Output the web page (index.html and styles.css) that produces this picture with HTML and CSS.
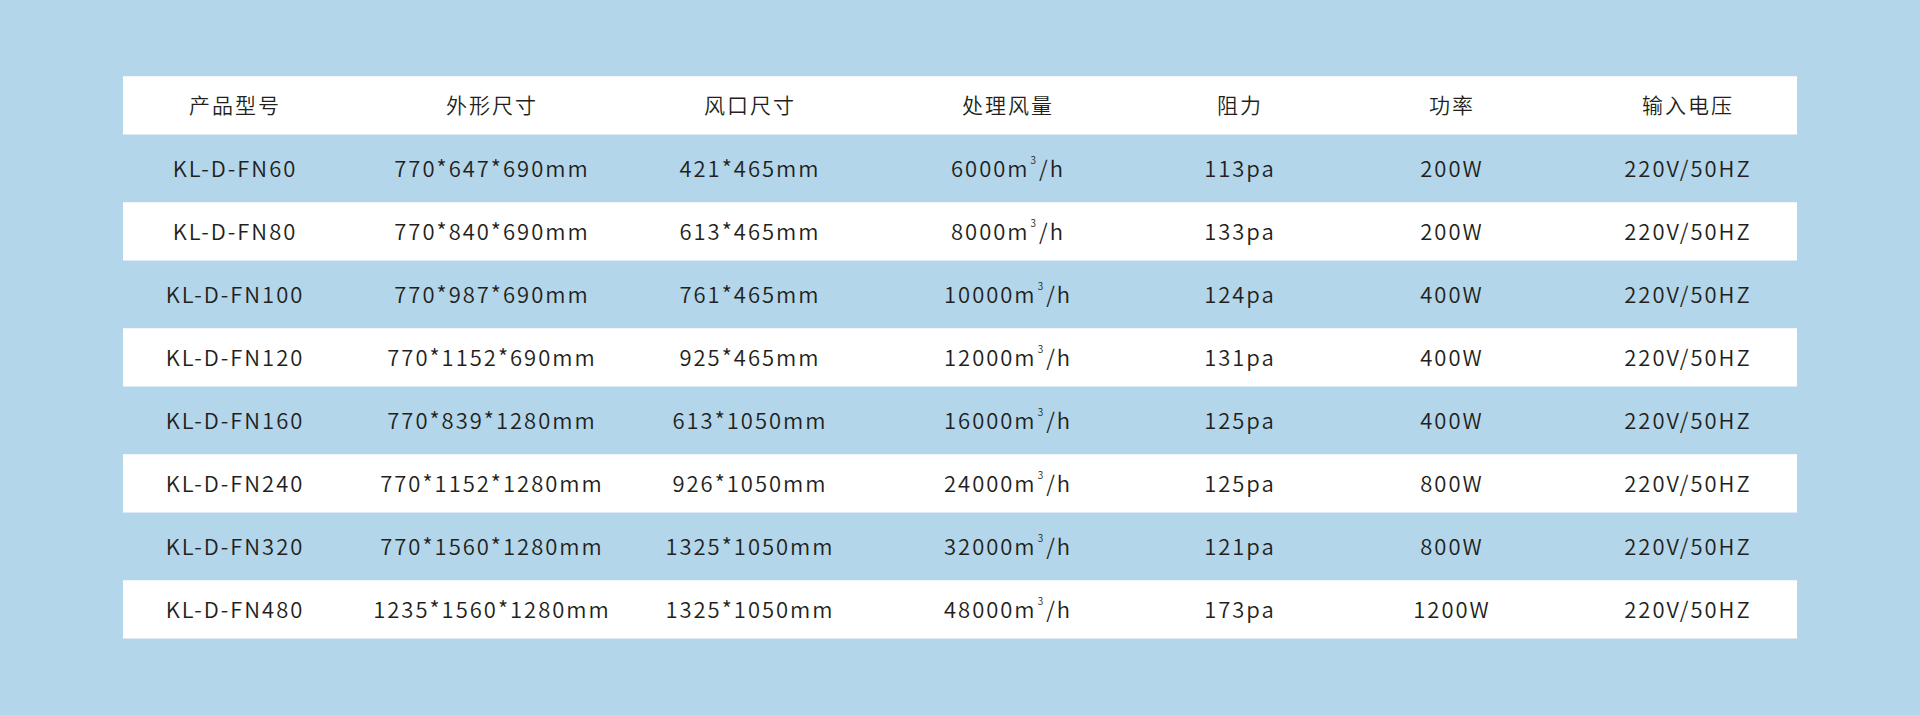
FILE: index.html
```html
<!DOCTYPE html>
<html lang="zh-CN">
<head>
<meta charset="utf-8">
<title>产品参数</title>
<link rel="stylesheet" href="styles.css">
</head>
<body>
<div class="page">
  <div class="spec-table">
    <div class="row head">
      <div class="cell">产品型号</div><div class="cell">外形尺寸</div><div class="cell">风口尺寸</div><div class="cell">处理风量</div><div class="cell">阻力</div><div class="cell">功率</div><div class="cell">输入电压</div>
    </div>
    <div class="row tall">
      <div class="cell">KL-D-FN60</div><div class="cell">770*647*690mm</div><div class="cell">421*465mm</div><div class="cell">6000m<span class="sup">3</span>/h</div><div class="cell">113pa</div><div class="cell">200W</div><div class="cell">220V/50HZ</div>
    </div>
    <div class="row white">
      <div class="cell">KL-D-FN80</div><div class="cell">770*840*690mm</div><div class="cell">613*465mm</div><div class="cell">8000m<span class="sup">3</span>/h</div><div class="cell">133pa</div><div class="cell">200W</div><div class="cell">220V/50HZ</div>
    </div>
    <div class="row tall">
      <div class="cell">KL-D-FN100</div><div class="cell">770*987*690mm</div><div class="cell">761*465mm</div><div class="cell">10000m<span class="sup">3</span>/h</div><div class="cell">124pa</div><div class="cell">400W</div><div class="cell">220V/50HZ</div>
    </div>
    <div class="row white">
      <div class="cell">KL-D-FN120</div><div class="cell">770*1152*690mm</div><div class="cell">925*465mm</div><div class="cell">12000m<span class="sup">3</span>/h</div><div class="cell">131pa</div><div class="cell">400W</div><div class="cell">220V/50HZ</div>
    </div>
    <div class="row tall">
      <div class="cell">KL-D-FN160</div><div class="cell">770*839*1280mm</div><div class="cell">613*1050mm</div><div class="cell">16000m<span class="sup">3</span>/h</div><div class="cell">125pa</div><div class="cell">400W</div><div class="cell">220V/50HZ</div>
    </div>
    <div class="row white">
      <div class="cell">KL-D-FN240</div><div class="cell">770*1152*1280mm</div><div class="cell">926*1050mm</div><div class="cell">24000m<span class="sup">3</span>/h</div><div class="cell">125pa</div><div class="cell">800W</div><div class="cell">220V/50HZ</div>
    </div>
    <div class="row tall">
      <div class="cell">KL-D-FN320</div><div class="cell">770*1560*1280mm</div><div class="cell">1325*1050mm</div><div class="cell">32000m<span class="sup">3</span>/h</div><div class="cell">121pa</div><div class="cell">800W</div><div class="cell">220V/50HZ</div>
    </div>
    <div class="row white">
      <div class="cell">KL-D-FN480</div><div class="cell">1235*1560*1280mm</div><div class="cell">1325*1050mm</div><div class="cell">48000m<span class="sup">3</span>/h</div><div class="cell">173pa</div><div class="cell">1200W</div><div class="cell">220V/50HZ</div>
    </div>
  </div>
</div>
</body>
</html>
```

FILE: styles.css
```css
html, body {
  margin: 0;
  padding: 0;
}
body {
  background: #b3d6eb;
  font-family: "Noto Sans CJK SC", "Noto Sans", sans-serif;
  color: #231f20;
}
.page {
  width: 1920px;
  height: 715px;
  padding-top: 76px;
  padding-left: 123px;
  box-sizing: border-box;
}
.spec-table {
  width: 1674px;
  display: flex;
  flex-direction: column;
}
.row {
  display: grid;
  grid-template-columns: 222px 292px 224px 292px 172px 252px 220px;
  height: 59px;
}
.row.head,
.row.white {
  background: #ffffff;
  box-shadow: inset 0 -1px 0 #dbeaf4, inset 0 1px 0 #eef5fa;
}
.row.tall {
  height: 67px;
}
.cell {
  display: flex;
  align-items: center;
  justify-content: center;
  font-size: 22px;
  font-weight: 350;
  line-height: 1;
  letter-spacing: 2px;
  padding-bottom: 3px;
  padding-left: 2px;
  white-space: nowrap;
}
.head .cell {
  font-size: 21px;
  letter-spacing: 2px;
  padding-left: 2px;
}
.sup {
  font-size: 10px;
  position: relative;
  top: -7px;
  margin-left: 1px;
  margin-right: 1px;
}
```
